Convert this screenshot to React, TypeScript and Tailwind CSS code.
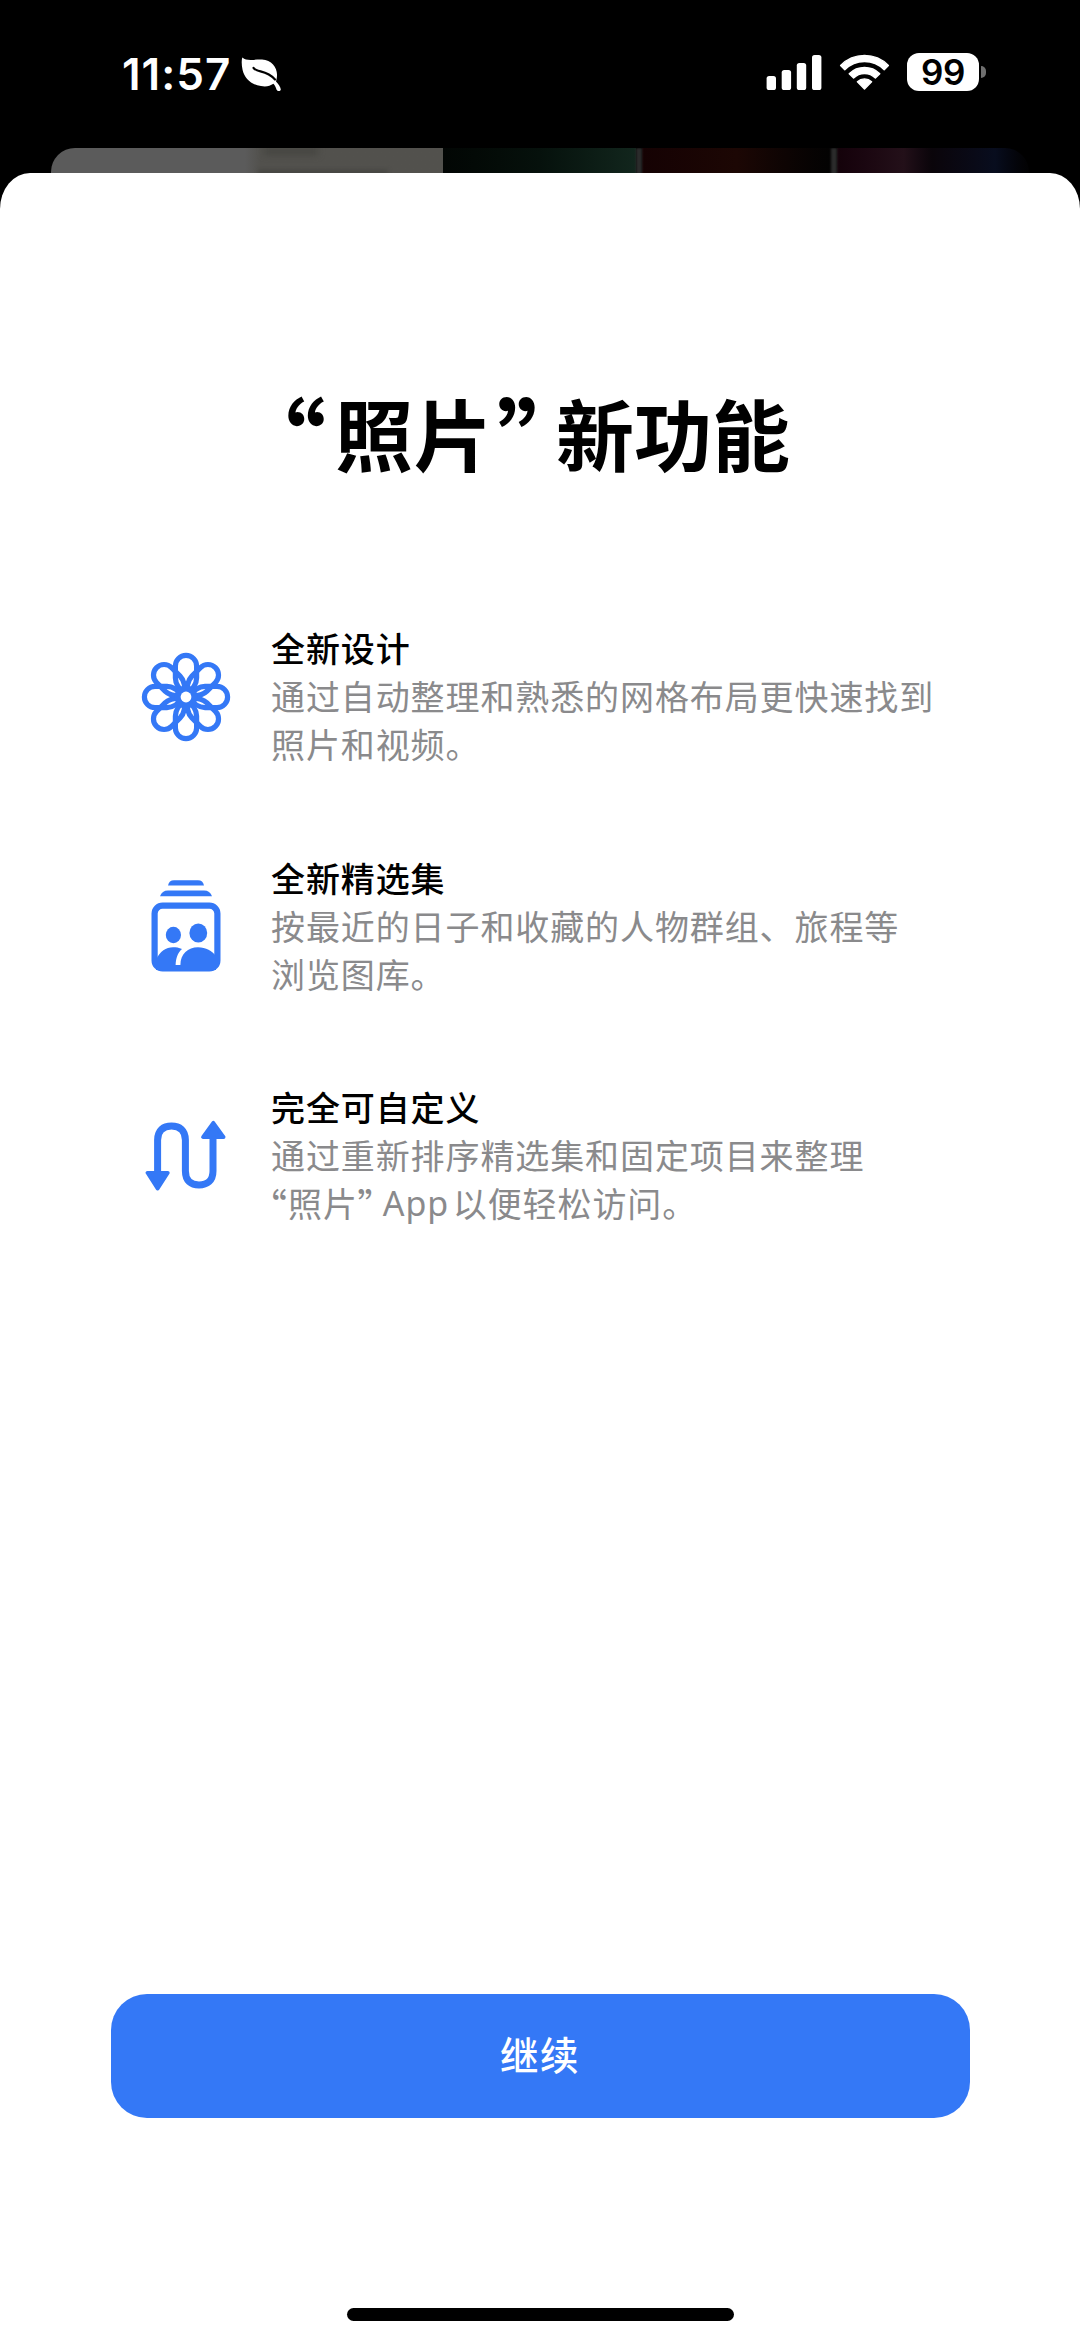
import type { ReactNode } from "react";

const PETAL =
  "M0 -2 C-5 -6 -10.6 -11 -10.6 -19 V-31 A10.6 10.6 0 0 1 10.6 -31 V-19 C10.6 -11 5 -6 0 -2 Z";

function FlowerIcon() {
  return (
    <svg width="90" height="90" viewBox="-45 -45 90 90" fill="none">
      {[0, 45, 90, 135, 180, 225, 270, 315].map((a) => (
        <path key={a} d={PETAL} transform={`rotate(${a})`} stroke="#3478f6" strokeWidth="5.2" />
      ))}
      <circle r="11.5" fill="#3478f6" />
      <circle r="5.4" fill="#fff" />
    </svg>
  );
}

function CollectionIcon() {
  return (
    <svg width="70" height="92" viewBox="0 0 70 92" fill="none">
      <path d="M17 5.5 Q18 0.3 23 0.3 H47 Q52 0.3 53 5.5 Z" fill="#3478f6" />
      <path d="M9 16.3 Q11 10.5 17 10.5 H53 Q59 10.5 61 16.3 Z" fill="#3478f6" />
      <rect x="3.6" y="25.6" width="62.8" height="62.8" rx="8" stroke="#3478f6" strokeWidth="6.2" />
      <ellipse cx="22.4" cy="55" rx="7.6" ry="8.3" fill="#3478f6" />
      <ellipse cx="47.3" cy="53" rx="8.9" ry="9.6" fill="#3478f6" />
      <path d="M5 80 C9 71 15 67.3 22 67.3 C25 67.3 28 67.7 31 69 C26.5 73 25 78 24.6 85 H29.4 C29.4 74 37 67.3 47 67.3 C55 67.3 61 71 65 76 V90 H5 Z" fill="#3478f6" />
    </svg>
  );
}

function ReorderIcon() {
  return (
    <svg width="82" height="72" viewBox="0 0 82 72" fill="none">
      <path d="M12.6 54 V20 C12.6 10 18.5 6 26.5 6 C34.5 6 40.4 10 40.4 20 V51 C40.4 61 46 65 54 65 C62 65 68 61 68 51 V17" stroke="#3478f6" strokeWidth="7" />
      <path d="M2.5 52.8 H22.8 L12.7 68.6 Z" fill="#3478f6" stroke="#3478f6" strokeWidth="3.8" strokeLinejoin="round" />
      <path d="M58 17 H78.6 L68.3 2.8 Z" fill="#3478f6" stroke="#3478f6" strokeWidth="3.8" strokeLinejoin="round" />
    </svg>
  );
}

function Feature({ icon, title, children }: { icon: ReactNode; title: string; children: ReactNode }) {
  return (
    <section className="flex h-[229.6px]">
      <div className="flex h-[145px] w-[271px] shrink-0 items-center justify-center pl-[100px]">{icon}</div>
      <div className="whitespace-nowrap text-[34px] leading-[48px] tracking-[0.9px]">
        <h2 className="font-medium text-black">{title}</h2>
        <p className="text-[#8a8a8c]">{children}</p>
      </div>
    </section>
  );
}

function StatusBar() {
  return (
    <header className="flex h-[148px] items-start justify-between pl-[122px] pr-[94px] text-white">
      <div className="flex pt-[53px]">
        <span className="w-[119px] font-['Inter'] text-[44px] font-semibold leading-[42px] tracking-[1px]">11:57</span>
        <svg className="mt-[4px]" width="41" height="36" viewBox="0 0 41 36">
          <path d="M1.3 0.5 C6 4.6 13 2.2 21 2.5 C31 3 36.7 11 36 19 C35.8 22 35.2 23.5 35 24.5 C37.5 27 39.5 30 39.8 32.5 C39.5 34.5 36.5 34.7 35.6 32.8 C34.8 30.5 34 28.5 32.4 26.8 C29 29 25 30 20 29 C10 28 3.5 21 1.6 13 C0.5 8 0.4 3.5 1.3 0.5 Z" fill="#fff" />
          <path d="M12.5 10.8 C16 16 25 12.5 34 22.5" stroke="#000" strokeWidth="2.2" fill="none" strokeLinecap="round" />
        </svg>
      </div>
      <div className="flex pt-[53px]">
        <svg width="56" height="38" viewBox="0 0 56 38" fill="#fff">
          <rect x="0.6" y="23" width="9.4" height="14" rx="2.6" />
          <rect x="15.7" y="17" width="9.4" height="20" rx="2.6" />
          <rect x="30.8" y="10" width="9.4" height="27" rx="2.6" />
          <rect x="46" y="2" width="9.4" height="35" rx="2.6" />
        </svg>
        <svg className="ml-[17px]" width="51" height="38" viewBox="0 0 51 38" fill="#fff" stroke="#fff" strokeWidth="1.4" strokeLinejoin="round">
          <path d="M1.6 12.4 A33.5 33.5 0 0 1 49.4 12.4 L45.2 16.7 A27.8 27.8 0 0 0 5.8 16.7 Z" />
          <path d="M10.2 20.8 A21.8 21.8 0 0 1 40.8 20.8 L36.4 25 A15.5 15.5 0 0 0 14.6 25 Z" />
          <path d="M18.4 28.8 A10.2 10.2 0 0 1 32.6 28.8 L25.5 36 Z" />
        </svg>
        <div className="ml-[17px] flex h-[38px] w-[72px] items-center justify-center rounded-[12px] bg-white font-['Inter'] text-[35px] font-semibold tracking-[-0.5px] text-black">99</div>
        <div className="ml-[2px] mt-[13px] h-[12px] w-[5px] rounded-r-full bg-[#6f6f6f]" />
      </div>
    </header>
  );
}

function DimmedPhotos() {
  return (
    <div className="ml-[51px] flex h-[62px] w-[978px] overflow-hidden rounded-t-[24px]">
      <div className="w-[194px] bg-[#5b5b5b]" />
      <div className="w-[198px] bg-linear-to-r from-[#5b5b5b] from-0% via-[#52514d] via-8% to-[#52514d]">
        <div className="ml-[19px] h-[7px] w-[54px] bg-[#454541] blur-[3px]" />
        <div className="ml-[13px] mt-[15px] h-[5px] w-[130px] bg-[#454541] blur-[2px]" />
      </div>
      <div className="w-[193px] bg-linear-to-r from-[#020604] via-[#06110c] to-[#12261d]" />
      <div className="w-[6px] bg-[#2b2b2b] blur-[1px]" />
      <div className="w-[189px] bg-linear-to-r from-[#150203] via-[#1c0704] to-[#030202]" />
      <div className="w-[6px] bg-[#2b2b2b] blur-[1px]" />
      <div className="flex grow">
        <div className="w-[95px] bg-linear-to-r from-[#14020a] from-0% via-[#231019] via-70% to-[#0a050a]" />
        <div className="grow bg-linear-to-r from-[#0a050a] from-0% via-[#080d1e] via-65% to-[#020203]" />
      </div>
    </div>
  );
}

export default function App() {
  return (
    <div className="flex h-[2341px] w-[1080px] flex-col overflow-hidden bg-black font-['Noto_Sans_CJK_SC',sans-serif]" lang="zh-CN">
      <StatusBar />
      <DimmedPhotos />
      <main className="z-10 -mt-[37px] flex grow flex-col bg-white [border-radius:30px_30px_0_0/36px_36px_0_0]">
        <h1 className="mt-[199px] flex h-[120px] whitespace-nowrap pl-[278px] text-[78px] font-bold leading-[120px] text-black">
          <span className="w-[57px] pt-[6px] text-[96px] [font-feature-settings:'palt']">“</span>
          <span className="tracking-[1px]">照片</span>
          <span className="w-[63px] pl-[4px] pt-[6px] text-[96px] [font-feature-settings:'palt']">”</span>
          <span>新功能</span>
        </h1>
        <div className="mt-[132px]">
          <Feature icon={<FlowerIcon />} title="全新设计">
            通过自动整理和熟悉的网格布局更快速找到
            <br />
            照片和视频。
          </Feature>
          <Feature icon={<CollectionIcon />} title="全新精选集">
            按最近的日子和收藏的人物群组、旅程等
            <br />
            浏览图库。
          </Feature>
          <Feature icon={<ReorderIcon />} title="完全可自定义">
            通过重新排序精选集和固定项目来整理
            <br />
            <span className="-ml-[3px] flex">
              <span className="w-[20px] pt-[2px] text-[37px] [font-feature-settings:'palt']">“</span>
              <span>照片</span>
              <span className="w-[25px] pt-[2px] text-[37px] [font-feature-settings:'palt']">”</span>
              <span className="w-[70px] font-['Noto_Sans']">App</span>
              <span>以便轻松访问。</span>
            </span>
          </Feature>
        </div>
        <button className="mx-auto mt-auto h-[124px] w-[859px] shrink-0 rounded-[36px] bg-[#3478f6] pb-[4px] text-[38.5px] font-medium tracking-[1.5px] text-white">继续</button>
        <div className="mx-auto mb-[20px] mt-[190px] h-[13px] w-[387px] shrink-0 rounded-full bg-black" />
      </main>
    </div>
  );
}
